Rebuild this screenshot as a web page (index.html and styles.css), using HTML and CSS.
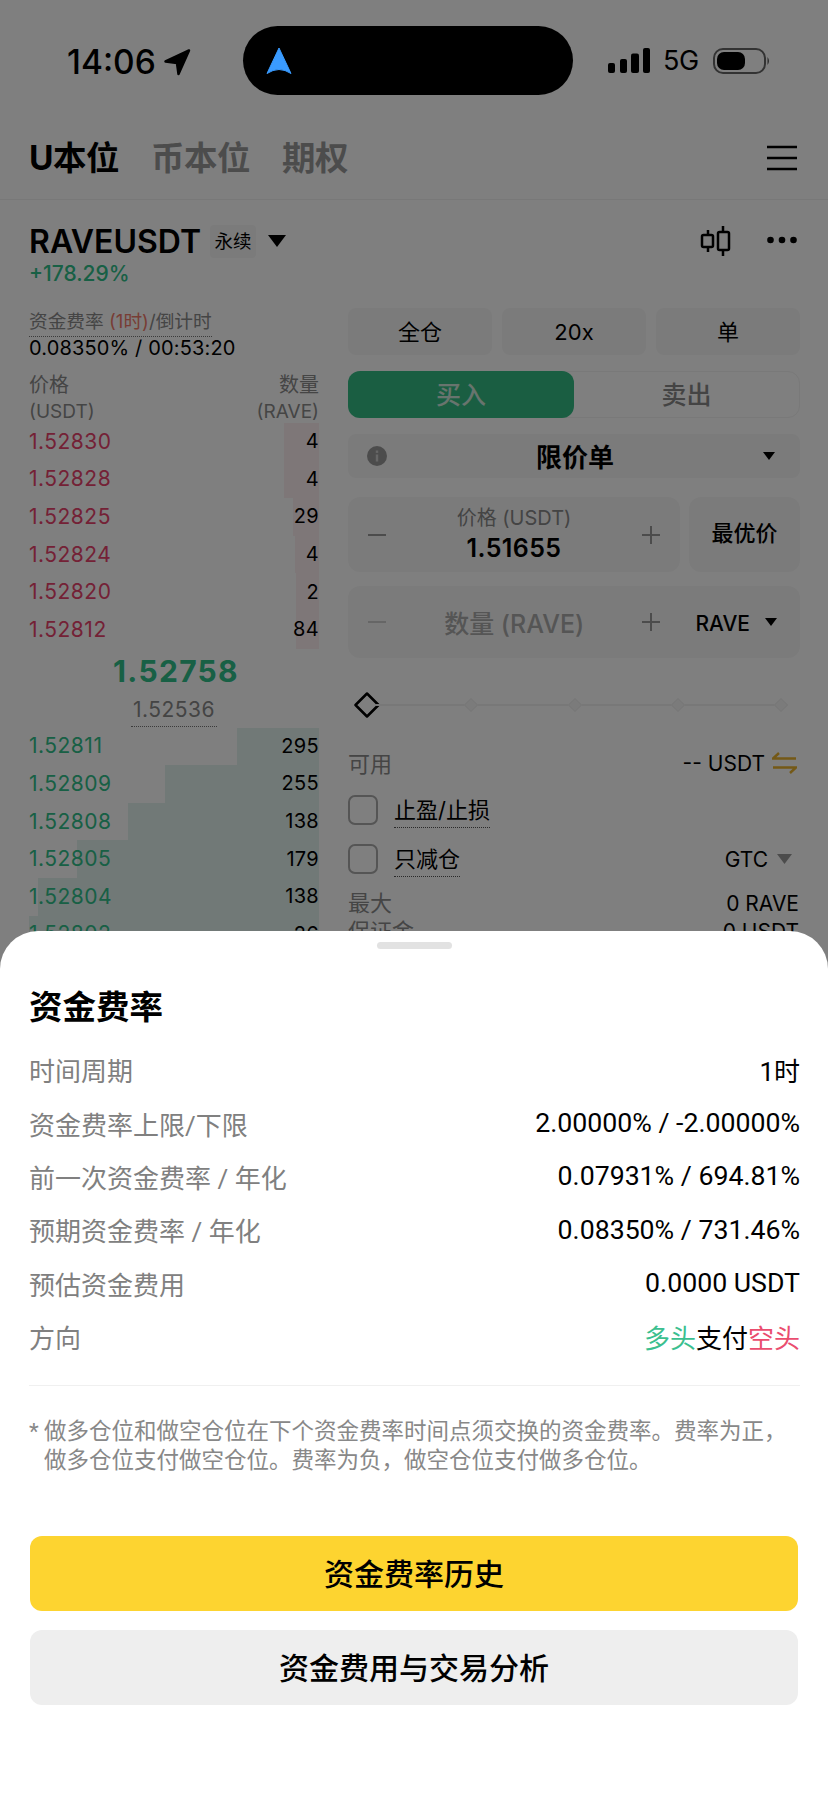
FILE: index.html
```html
<!DOCTYPE html>
<html lang="zh-CN">
<head>
<meta charset="utf-8">
<title>资金费率</title>
<link rel="stylesheet" href="styles.css">
</head>
<body>
<div class="app">
  <div class="status">
    <div class="clock">
      <span class="time">14:06</span>
      <svg class="loc" width="28" height="28" viewBox="0 0 28 28"><path d="M26 2.500 2.500 13.500l11.500 1.500 1.500 11z" fill="#000" stroke="#000" stroke-width="2.500" stroke-linejoin="round"/></svg>
    </div>
    <div class="island">
      <svg width="26" height="28" viewBox="0 0 26 28"><path d="M13 1 25 26.500Q13 18.500 1 26.500z" fill="#3a9bff" stroke="#3a9bff" stroke-linejoin="round"/></svg>
    </div>
    <div class="sys">
      <svg width="42" height="26" viewBox="0 0 42 26"><rect x="0" y="15" width="7" height="10" rx="2"/><rect x="12" y="11" width="7" height="14" rx="2"/><rect x="23" y="5.500" width="8" height="19.500" rx="2"/><rect x="35" y="0" width="7" height="25" rx="2"/></svg>
      <span class="net">5G</span>
      <svg width="58" height="26" viewBox="0 0 58 26"><rect x="1" y="1" width="51" height="24" rx="9" fill="none" stroke="#666" stroke-width="2"/><rect x="4" y="4" width="28" height="18" rx="7"/><path d="M54.500 9q3 4 0 8z" fill="#555"/></svg>
    </div>
  </div>

  <div class="tabs">
    <span class="tab tab-on">U本位</span>
    <span class="tab">币本位</span>
    <span class="tab">期权</span>
    <svg class="burger" width="30" height="26" viewBox="0 0 30 26"><path d="M0 2h30M0 13h30M0 24h30" stroke="#000" stroke-width="2.600"/></svg>
  </div>

  <div class="symbol">
    <div class="symbol-left">
      <div class="symbol-name">
        <span class="pair">RAVEUSDT</span>
        <span class="chip">永续</span>
        <svg class="tri-lg" width="18" height="12" viewBox="0 0 18 12"><path d="M0 0h18L9 12z"/></svg>
      </div>
      <div class="change">+178.29%</div>
    </div>
    <svg class="candle" width="31" height="32" viewBox="0 0 31 32"><path d="M8 5v5M8 22v5M23 1v6M23 25v6" stroke="#000" stroke-width="2.500" fill="none"/><rect x="2" y="10" width="11" height="12" rx="1.500" fill="none" stroke="#000" stroke-width="2.500"/><rect x="18" y="7" width="11" height="18" rx="1.500" fill="none" stroke="#000" stroke-width="2.500"/></svg>
    <svg class="dots" width="30" height="8" viewBox="0 0 30 8"><circle cx="3.500" cy="4" r="3.300"/><circle cx="15" cy="4" r="3.300"/><circle cx="26.500" cy="4" r="3.300"/></svg>
  </div>

  <div class="main">
    <section class="book">
      <div class="fund"><span class="fund-label">资金费率 <em>(1时)</em>/倒计时</span></div>
      <div class="fund-val">0.08350% / 00:53:20</div>
      <div class="book-head"><span>价格</span><span>数量</span></div>
      <div class="book-head book-head-2"><span>(USDT)</span><span>(RAVE)</span></div>

      <div class="level ask"><i class="depth" style="width:35px"></i><span class="px">1.52830</span><span class="qty">4</span></div>
      <div class="level ask"><i class="depth" style="width:35px"></i><span class="px">1.52828</span><span class="qty">4</span></div>
      <div class="level ask"><i class="depth" style="width:26px"></i><span class="px">1.52825</span><span class="qty">29</span></div>
      <div class="level ask"><i class="depth" style="width:24px"></i><span class="px">1.52824</span><span class="qty">4</span></div>
      <div class="level ask"><i class="depth" style="width:23px"></i><span class="px">1.52820</span><span class="qty">2</span></div>
      <div class="level ask"><i class="depth" style="width:23px"></i><span class="px">1.52812</span><span class="qty">84</span></div>

      <div class="mid">1.52758</div>
      <div class="mark"><span>1.52536</span></div>

      <div class="level bid"><i class="depth" style="width:82px"></i><span class="px">1.52811</span><span class="qty">295</span></div>
      <div class="level bid"><i class="depth" style="width:154px"></i><span class="px">1.52809</span><span class="qty">255</span></div>
      <div class="level bid"><i class="depth" style="width:191px"></i><span class="px">1.52808</span><span class="qty">138</span></div>
      <div class="level bid"><i class="depth" style="width:242px"></i><span class="px">1.52805</span><span class="qty">179</span></div>
      <div class="level bid"><i class="depth" style="width:281px"></i><span class="px">1.52804</span><span class="qty">138</span></div>
      <div class="level bid"><i class="depth" style="width:290px"></i><span class="px">1.52802</span><span class="qty">26</span></div>
    </section>

    <section class="form">
      <div class="margin-row">
        <div class="pill">全仓</div>
        <div class="pill">20x</div>
        <div class="pill">单</div>
      </div>
      <div class="side">
        <div class="side-btn side-buy">买入</div>
        <div class="side-btn">卖出</div>
      </div>
      <div class="otype">
        <svg width="20" height="20" viewBox="0 0 20 20"><circle cx="10" cy="10" r="10" fill="#999"/><rect x="8.800" y="8.500" width="2.400" height="7" fill="#ccc"/><rect x="8.800" y="4.500" width="2.400" height="2.400" fill="#ccc"/></svg>
        <span class="otype-name">限价单</span>
        <svg width="12" height="8" viewBox="0 0 12 8"><path d="M0 0h12L6 8z"/></svg>
      </div>
      <div class="price-row">
        <div class="field">
          <svg class="stepper" width="18" height="18" viewBox="0 0 18 18"><path d="M0 9h18" stroke="#999" stroke-width="2"/></svg>
          <div class="field-mid">
            <div class="field-label">价格 (USDT)</div>
            <div class="field-val">1.51655</div>
          </div>
          <svg class="stepper" width="18" height="18" viewBox="0 0 18 18"><path d="M0 9h18M9 0v18" stroke="#999" stroke-width="2"/></svg>
        </div>
        <div class="best">最优价</div>
      </div>
      <div class="qty-field">
        <svg class="stepper" width="18" height="18" viewBox="0 0 18 18"><path d="M0 9h18" stroke="#ccc" stroke-width="2"/></svg>
        <div class="qty-label">数量 (RAVE)</div>
        <svg class="stepper" width="18" height="18" viewBox="0 0 18 18"><path d="M0 9h18M9 0v18" stroke="#999" stroke-width="2"/></svg>
        <span class="unit">RAVE</span>
        <svg width="12" height="8" viewBox="0 0 12 8"><path d="M0 0h12L6 8z"/></svg>
      </div>
      <div class="slider">
        <svg class="knob" width="26" height="26" viewBox="0 0 26 26"><path d="M13 1.500 24.500 13 13 24.500 1.500 13z" fill="#fff" stroke="#000" stroke-width="2.500" stroke-linejoin="round"/></svg>
        <i class="track"></i><i class="tick"></i>
        <i class="track"></i><i class="tick"></i>
        <i class="track"></i><i class="tick"></i>
        <i class="track"></i><i class="tick"></i>
      </div>
      <div class="avail">
        <span class="muted big">可用</span>
        <span class="avail-val">-- USDT
          <svg width="25" height="22" viewBox="0 0 25 22"><path d="M7 1 1 6.500h23M18 21l6-5.500H1" fill="none" stroke="#e9b22e" stroke-width="2.500"/></svg>
        </span>
      </div>
      <div class="check-row">
        <i class="box"></i><span class="check-label">止盈/止损</span>
      </div>
      <div class="check-row check-row-2">
        <i class="box"></i><span class="check-label">只减仓</span>
        <span class="tif">GTC
          <svg width="15" height="10" viewBox="0 0 15 10"><path d="M0 0h15L7.500 10z" fill="#999"/></svg>
        </span>
      </div>
      <div class="stat stat-first"><span class="muted big">最大</span><span>0 RAVE</span></div>
      <div class="stat"><span class="muted big">保证金</span><span>0 USDT</span></div>
    </section>
  </div>

  <div class="scrim"></div>

  <div class="sheet">
    <div class="handle"></div>
    <h2 class="sheet-title">资金费率</h2>
    <div class="rows">
      <div class="row"><span class="row-k">时间周期</span><span>1时</span></div>
      <div class="row"><span class="row-k">资金费率上限/下限</span><span class="num">2.00000% / -2.00000%</span></div>
      <div class="row"><span class="row-k">前一次资金费率 / 年化</span><span class="num">0.07931% / 694.81%</span></div>
      <div class="row"><span class="row-k">预期资金费率 / 年化</span><span class="num">0.08350% / 731.46%</span></div>
      <div class="row"><span class="row-k">预估资金费用</span><span class="num">0.0000 USDT</span></div>
      <div class="row"><span class="row-k">方向</span><span><b class="long">多头</b>支付<b class="short">空头</b></span></div>
    </div>
    <div class="note">
      <span class="star">*</span>
      <p>做多仓位和做空仓位在下个资金费率时间点须交换的资金费率。费率为正，做多仓位支付做空仓位。费率为负，做空仓位支付做多仓位。</p>
    </div>
    <button class="cta cta-primary">资金费率历史</button>
    <button class="cta cta-second">资金费用与交易分析</button>
  </div>
</div>
</body>
</html>
```
FILE: styles.css
```css
* { box-sizing: border-box; }
html, body { margin: 0; padding: 0; }
body {
  font-family: Inter, "Noto Sans CJK SC", sans-serif;
  color: #000;
  background: #fff;
}
.app { position: relative; width: 828px; height: 1800px; overflow: hidden; background: #fff; }

/* status bar */
.status { display: flex; align-items: center; height: 120px; padding: 26px 0 25px 67px; }
.clock { display: flex; align-items: center; width: 176px; padding-top: 3px; }
.time { font-size: 33.500px; font-weight: 500; line-height: 40px; }
.loc { margin-left: 7px; }
.island { position: relative; z-index: 2; display: flex; align-items: center; width: 330px; height: 69px; padding-left: 23px; background: #000; border-radius: 35px; }
.sys { display: flex; align-items: center; margin-left: 35px; padding-top: 1px; }
.net { margin-left: 13px; margin-right: 14px; font-size: 27px; line-height: 30px; letter-spacing: -0.500px; }

/* tabs */
.tabs { display: flex; align-items: center; height: 80px; padding: 0 31px 4px 29px; border-bottom: 1px solid #f0f0f0; }
.tab { margin-right: 32px; font-size: 33.500px; font-weight: 700; color: #999; line-height: 40px; letter-spacing: -0.500px; }
.tab-on { color: #000; }
.burger { margin-left: auto; }

/* symbol header */
.symbol { display: flex; align-items: flex-start; height: 108px; padding: 23px 31px 0 29px; }
.symbol-left { flex: 1; }
.symbol-name { display: flex; align-items: center; height: 36px; }
.pair { font-size: 32px; font-weight: 600; }
.chip { margin-left: 9px; width: 46px; text-align: center; height: 33px; line-height: 33px; font-size: 18.500px; background: #f7f7f7; border-radius: 4px; }
.tri-lg { margin-left: 12px; }
.change { margin-top: 3px; font-size: 21px; line-height: 24px; color: #30c08a; font-weight: 500; }
.candle { margin-top: 2px; }
.dots { margin-left: 36px; margin-top: 13px; }

/* two columns */
.main { display: flex; gap: 29px; padding: 0 28px 0 29px; }
.book { width: 290px; flex: none; font-size: 20px; }
.form { flex: 1; min-width: 0; }

/* order book */
.fund { height: 29px; }
.fund-label { display: inline-block; height: 29px; line-height: 27px; color: #8a8a8a; border-bottom: 1.500px dotted #777; font-size: 18.700px; }
.fund-label em { font-style: normal; color: #f07a6a; }
.fund-val { height: 23px; line-height: 23px; font-size: 20px; letter-spacing: 0.150px; }
.book-head { display: flex; justify-content: space-between; margin-top: 12px; line-height: 26px; color: #8a8a8a; font-size: 20px; }
.book-head-2 { margin-top: 0; height: 25px; line-height: 27px; font-size: 19px; }
.level { position: relative; display: flex; justify-content: space-between; align-items: center; height: 37.600px; font-size: 20px; }
.px, .qty { position: relative; top: -0.500px; }
.px { font-size: 21px; letter-spacing: 0.500px; }
.qty { letter-spacing: 0.300px; }
.depth { position: absolute; top: 0; bottom: 0; right: 0; }
.ask .depth { background: #fdeef0; }
.bid .depth { background: #e2f2ee; }
.ask .px { color: #e8436c; }
.bid .px { color: #30c08a; }
.mid { height: 46px; padding-left: 4px; line-height: 44px; text-align: center; font-size: 30px; font-weight: 700; letter-spacing: 1.300px; color: #30c08a; }
.mark { height: 33px; text-align: center; line-height: 30px; color: #888; }
.mark span { display: inline-block; height: 32px; line-height: 30px; padding: 0 2px; font-size: 21px; letter-spacing: 0.500px; border-bottom: 1.500px dotted #777; }

/* order form */
.margin-row { display: flex; gap: 10px; }
.pill { flex: 1; height: 47px; line-height: 49px; text-align: center; font-size: 22px; background: #f7f7f7; border-radius: 8px; }
.side { display: flex; height: 47px; margin-top: 16px; border: 1px solid #f2f2f2; border-radius: 12px; }
.side-btn { flex: 1; line-height: 47px; text-align: center; font-size: 25px; font-weight: 500; color: #888; }
.side-buy { margin: -1px 0 -1px -1px; line-height: 49px; flex: 0 0 226px; background: #34bd85; color: #d0e8dc; border-radius: 12px; }
.otype { display: flex; align-items: center; justify-content: space-between; height: 44px; margin-top: 16px; padding: 0 25px 0 19px; background: #f7f7f7; border-radius: 8px; }
.otype-name { position: relative; top: -1px; font-size: 26px; font-weight: 600; }
.price-row { display: flex; gap: 9px; margin-top: 19px; }
.field { display: flex; align-items: center; flex: 1; height: 75px; padding: 0 20px; background: #f7f7f7; border-radius: 12px; }
.stepper { flex: none; }
.field-mid { flex: 1; text-align: center; }
.field-label { font-size: 20px; line-height: 26px; color: #888; }
.field-val { font-size: 25px; font-weight: 600; line-height: 34px; letter-spacing: 0.400px; }
.best { width: 111px; height: 75px; line-height: 73px; text-align: center; font-size: 22px; font-weight: 500; background: #f7f7f7; border-radius: 12px; }
.qty-field { display: flex; align-items: center; height: 72px; margin-top: 14px; padding: 0 23px 0 20px; background: #f7f7f7; border-radius: 12px; }
.qty-label { flex: 1; text-align: center; font-size: 25px; font-weight: 500; color: #aaa; }
.unit { position: relative; top: 1px; margin-left: 35px; margin-right: 15px; font-size: 21px; font-weight: 500; }
.slider { display: flex; align-items: center; height: 28px; margin-top: 33px; padding-left: 6px; padding-right: 12px; }
.knob { flex: none; width: 26px; margin-right: -5px; }
.track { flex: 1; height: 2px; background: #f0f0f0; }
.tick { flex: none; width: 10px; height: 10px; margin: 0 2px; background: #f7f7f7; border: 1px solid #eee; transform: rotate(45deg); }
.avail { display: flex; align-items: center; justify-content: space-between; height: 30px; margin-top: 29px; font-size: 21px; padding-right: 3px; }
.muted { color: #8a8a8a; }
.big { position: relative; top: -1px; font-size: 22px; }
.avail-val { display: flex; align-items: center; gap: 7px; }
.check-row { display: flex; align-items: center; height: 30px; margin-top: 17px; font-size: 22px; }
.check-row-2 { margin-top: 19px; }
.box { width: 30px; height: 30px; margin-right: 16px; border: 2px solid #aaa; border-radius: 7px; }
.check-label { display: inline-block; line-height: 30px; height: 33px; margin-top: 3px; border-bottom: 1.500px dotted #555; }
.tif { display: flex; align-items: center; gap: 9px; margin-left: auto; padding-right: 8px; font-size: 21px; }
.stat { display: flex; justify-content: space-between; height: 28px; padding-right: 1px; line-height: 28px; font-size: 21px; }
.stat-first { margin-top: 16px; }

/* overlay */
.scrim { position: absolute; inset: 0; background: rgba(0, 0, 0, 0.5); }

/* bottom sheet */
.sheet {
  position: absolute; left: 0; right: 0; top: 931px; bottom: 0;
  padding: 11px 28px 0 29px;
  background: #fff;
  border-radius: 38px 38px 0 0;
  font-family: Roboto, "Noto Sans CJK SC", sans-serif;
}
.handle { width: 75px; height: 7px; margin: 0 auto; background: #e2e2e2; border-radius: 4px; }
.sheet-title { margin: 36px 0 0; font-size: 33.500px; line-height: 46px; font-weight: 700; }
.rows { margin-top: 12px; padding-bottom: 22px; border-bottom: 1px solid #f0f0f0; }
.row { display: flex; justify-content: space-between; align-items: center; height: 53.400px; font-size: 26px; }
.row-k { color: #808080; }
.num { font-size: 26.700px; }
.long, .short { font-weight: 400; }
.long { color: #3bbf8f; }
.short { color: #ea4d6f; }
.note { display: flex; margin-top: 31px; font-size: 22.500px; line-height: 29px; color: #888; }
.star { flex: none; width: 15px; }
.note p { margin: 0; width: 752px; }
.cta {
  display: block; width: 768px; height: 75px; margin: 0 0 0 1px; padding: 0 0 3px;
  border: 0; border-radius: 12px;
  font-family: inherit; font-size: 30px; font-weight: 500; color: #000;
}
.cta-primary { margin-top: 61px; background: #fdd430; }
.cta-second { margin-top: 19px; background: #eee; }
```
